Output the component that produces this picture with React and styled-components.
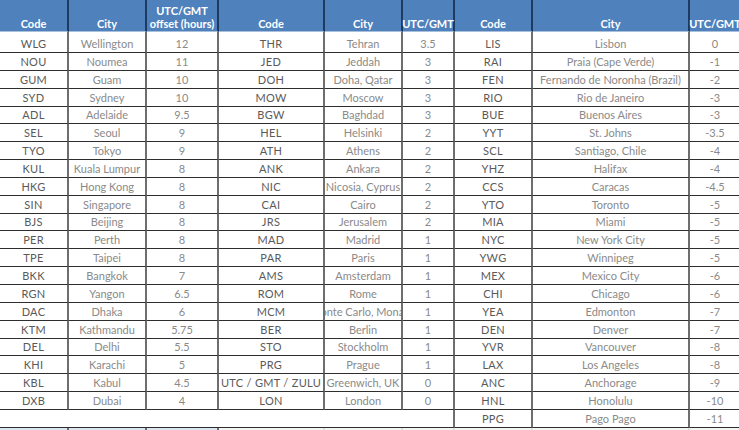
import React from "react";
import styled, { createGlobalStyle } from "styled-components";

const Global = createGlobalStyle`
  html, body { margin: 0; padding: 0; background: #ffffff; overflow: hidden; }
  body { font-family: Lato, "Liberation Sans", sans-serif; }
`;

const g1 = [
  ["WLG", "Wellington", "12"], ["NOU", "Noumea", "11"], ["GUM", "Guam", "10"],
  ["SYD", "Sydney", "10"], ["ADL", "Adelaide", "9.5"], ["SEL", "Seoul", "9"],
  ["TYO", "Tokyo", "9"], ["KUL", "Kuala Lumpur", "8"], ["HKG", "Hong Kong", "8"],
  ["SIN", "Singapore", "8"], ["BJS", "Beijing", "8"], ["PER", "Perth", "8"],
  ["TPE", "Taipei", "8"], ["BKK", "Bangkok", "7"], ["RGN", "Yangon", "6.5"],
  ["DAC", "Dhaka", "6"], ["KTM", "Kathmandu", "5.75"], ["DEL", "Delhi", "5.5"],
  ["KHI", "Karachi", "5"], ["KBL", "Kabul", "4.5"], ["DXB", "Dubai", "4"],
];
const g2 = [
  ["THR", "Tehran", "3.5"], ["JED", "Jeddah", "3"], ["DOH", "Doha, Qatar", "3"],
  ["MOW", "Moscow", "3"], ["BGW", "Baghdad", "3"], ["HEL", "Helsinki", "2"],
  ["ATH", "Athens", "2"], ["ANK", "Ankara", "2"], ["NIC", "Nicosia, Cyprus", "2"],
  ["CAI", "Cairo", "2"], ["JRS", "Jerusalem", "2"], ["MAD", "Madrid", "1"],
  ["PAR", "Paris", "1"], ["AMS", "Amsterdam", "1"], ["ROM", "Rome", "1"],
  ["MCM", "Monte Carlo, Monaco", "1"], ["BER", "Berlin", "1"], ["STO", "Stockholm", "1"],
  ["PRG", "Prague", "1"], ["UTC / GMT / ZULU", "Greenwich, UK", "0"], ["LON", "London", "0"],
];
const g3 = [
  ["LIS", "Lisbon", "0"], ["RAI", "Praia (Cape Verde)", "-1"], ["FEN", "Fernando de Noronha (Brazil)", "-2"],
  ["RIO", "Rio de Janeiro", "-3"], ["BUE", "Buenos Aires", "-3"], ["YYT", "St. Johns", "-3.5"],
  ["SCL", "Santiago, Chile", "-4"], ["YHZ", "Halifax", "-4"], ["CCS", "Caracas", "-4.5"],
  ["YTO", "Toronto", "-5"], ["MIA", "Miami", "-5"], ["NYC", "New York City", "-5"],
  ["YWG", "Winnipeg", "-5"], ["MEX", "Mexico City", "-6"], ["CHI", "Chicago", "-6"],
  ["YEA", "Edmonton", "-7"], ["DEN", "Denver", "-7"], ["YVR", "Vancouver", "-8"],
  ["LAX", "Los Angeles", "-8"], ["ANC", "Anchorage", "-9"], ["HNL", "Honolulu", "-10"],
  ["PPG", "Pago Pago", "-11"],
];

const Sheet = styled.div`
  display: grid;
  grid-template-columns: 69px 78px 72px 106px 78px 52px 78px 157px 52px;
  grid-template-rows: 32px 21px repeat(20, 17.85px) 18px 6px;
  width: 742px;
  font-size: 11px;
  line-height: 13px;
`;

const Head = styled.div`
  background: #4f81bd;
  color: #ffffff;
  font-weight: 700;
  display: flex;
  align-items: flex-end;
  justify-content: center;
  text-align: center;
  padding: 0 2px 1px;
  box-sizing: border-box;
  border-right: 2px solid #1f3a60;
  border-bottom: 1px solid #a9c0dd;
  white-space: nowrap;
`;

const Cell = styled.div`
  display: flex;
  align-items: flex-end;
  justify-content: center;
  padding: 0 2px 2px;
  box-sizing: border-box;
  border-right: 2px solid #6e6e6e;
  border-bottom: 1px solid #2e2e2e;
  white-space: nowrap;
  overflow: hidden;
  color: ${(p) => (p.$kind === "code" ? "#5a5a5a" : "#8a8a8a")};
  font-weight: 400;
  letter-spacing: ${(p) => (p.$kind === "code" ? "0.3px" : "0")};
`;

const Blank = styled.div`
  grid-column: span ${(p) => p.$span};
  box-sizing: border-box;
  border-right: 2px solid #6e6e6e;
  border-bottom: 1px solid #2e2e2e;
`;

const Next = styled.div`
  box-sizing: border-box;
  background: ${(p) => (p.$tone === "blue" ? "#dce6f1" : "#f4f4f4")};
  border-right: 2px solid ${(p) => (p.$tone === "blue" ? "#6e6e6e" : "#e0e0e0")};
`;

function Group({ row }) {
  return (
    <>
      <Cell $kind="code">{row[0]}</Cell>
      <Cell>{row[1]}</Cell>
      <Cell>{row[2]}</Cell>
    </>
  );
}

export default function App() {
  const heads = [
    "Code", "City", <>UTC/GMT<br />offset (hours)</>,
    "Code", "City", "UTC/GMT",
    "Code", "City", "UTC/GMT",
  ];
  return (
    <>
      <Global />
      <Sheet>
        {heads.map((h, i) => (
          <Head key={i}>{h}</Head>
        ))}
        {g1.map((r, i) => (
          <React.Fragment key={i}>
            <Group row={r} />
            <Group row={g2[i]} />
            <Group row={g3[i]} />
          </React.Fragment>
        ))}
        <Blank $span={6} />
        <Group row={g3[21]} />
        <Next $tone="blue" />
        <Next $tone="blue" />
        <Next $tone="blue" />
        <Next />
        <Next />
        <Next />
        <Next />
        <Next />
        <Next />
      </Sheet>
    </>
  );
}
